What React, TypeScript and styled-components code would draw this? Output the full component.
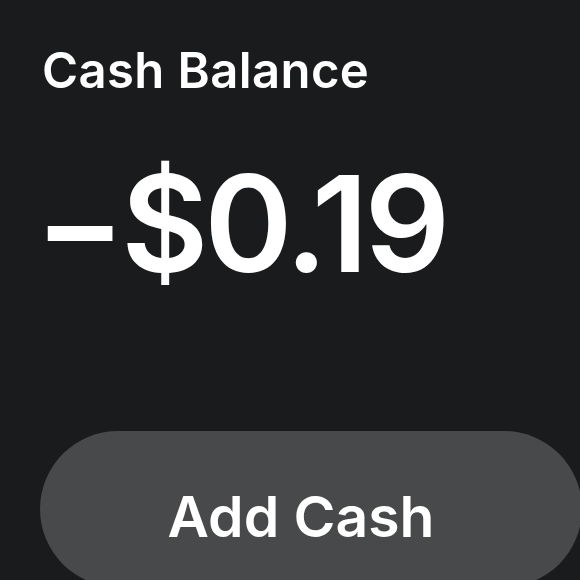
import React from 'react';
import styled, { createGlobalStyle } from 'styled-components';

const GlobalStyle = createGlobalStyle`
  html, body {
    margin: 0;
    padding: 0;
    background: #1a1b1d;
    overflow: hidden;
  }
  body {
    font-family: Inter, "Noto Sans", sans-serif;
    color: #ffffff;
  }
`;

const Screen = styled.main`
  width: 580px;
  height: 580px;
  overflow: hidden;
  display: flex;
  flex-direction: column;
  padding: 41px 0 0 42px;
  box-sizing: border-box;
`;

const Title = styled.h1`
  margin: 0;
  font-size: 49px;
  font-weight: 600;
  line-height: 60px;
  letter-spacing: 0.4px;
`;

const Amount = styled.p`
  margin: 52px 0 0 -7px;
  font-size: 134px;
  font-weight: 600;
  line-height: 140px;
  letter-spacing: -4px;
`;

const AddButton = styled.button`
  flex-shrink: 0;
  margin-top: 138px;
  margin-left: -2px;
  width: 542px;
  height: 156px;
  border: none;
  border-radius: 78px;
  background: #48494b;
  color: #ffffff;
  font-family: Inter, "Noto Sans", sans-serif;
  font-size: 57px;
  font-weight: 600;
  padding: 14px 20px 0 0;
  cursor: pointer;
`;

export default function App() {
  return (
    <>
      <GlobalStyle />
      <Screen>
        <Title>Cash Balance</Title>
        <Amount>−$0.19</Amount>
        <AddButton>Add Cash</AddButton>
      </Screen>
    </>
  );
}
